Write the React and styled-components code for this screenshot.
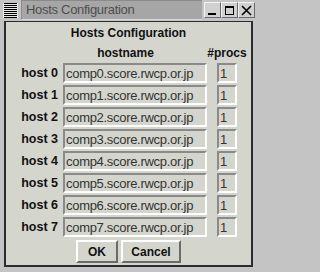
import React from 'react';
import styled, { createGlobalStyle } from 'styled-components';

const GlobalStyle = createGlobalStyle`
  body {
    margin: 0;
    background: #c4c4c4;
    font-family: "Liberation Sans", Arial, sans-serif;
  }
`;

const Window = styled.div`
  width: 257px;
  height: 272px;
  box-sizing: border-box;
  background: #c4c4c4;
  display: flex;
  flex-direction: column;
  overflow: hidden;
`;

const TitleBar = styled.div`
  height: 20px;
  display: flex;
  align-items: stretch;
  padding-right: 2px;
`;

const MenuButton = styled.div`
  width: 21px;
  display: flex;
  align-items: center;
  justify-content: center;
`;

const TitleLabel = styled.div`
  flex: 1;
  background: #a6a6a6;
  border-top: 1px solid #8a8a8a;
  border-left: 1px solid #8a8a8a;
  border-bottom: 1px solid #d8d8d8;
  color: #4e4e4e;
  font-size: 13px;
  letter-spacing: -0.3px;
  line-height: 18px;
  padding-left: 4px;
  margin: 0 2px 0 0;
  white-space: nowrap;
`;

const WinButton = styled.div`
  width: 17px;
  height: 16px;
  margin-top: 2px;
  box-sizing: border-box;
  background: #d0d0d0;
  border-top: 1px solid #f4f4f4;
  border-left: 1px solid #f4f4f4;
  border-right: 1px solid #6a6a6a;
  border-bottom: 1px solid #6a6a6a;
  display: flex;
  align-items: center;
  justify-content: center;
  & + & {
    margin-left: 0;
  }
`;

const Body = styled.div`
  flex: 1;
  padding: 1px 4px 5px 4px;
  display: flex;
`;

const Content = styled.div`
  flex: 1;
  background: #d4d6ce;
  border-top: 1px solid #2c2c2c;
  border-left: 2px solid #2c2c2c;
  border-right: 2px solid #2c2c2c;
  border-bottom: 2px solid #2c2c2c;
  display: flex;
  flex-direction: column;
  color: #111;
`;

const Heading = styled.div`
  margin: 3px 0 4px;
  line-height: 16px;
  font-size: 12px;
  font-weight: bold;
  text-align: center;
`;

const HostGrid = styled.div`
  display: grid;
  grid-template-columns: 57px 144px 40px;
  grid-template-rows: 16px;
  grid-auto-rows: 20px;
  row-gap: 2px;
`;

const ColHeader = styled.div`
  font-size: 12px;
  font-weight: bold;
  line-height: 16px;
  text-align: center;
  white-space: nowrap;
  padding-right: ${(p) => p.$shift || 0}px;
`;

const HostLabel = styled.div`
  font-size: 12.5px;
  font-weight: bold;
  text-align: right;
  padding-right: 5px;
  line-height: 20px;
  white-space: nowrap;
`;

const Field = styled.input`
  width: ${(p) => p.$w}px;
  height: 20px;
  box-sizing: border-box;
  margin: 0;
  padding: 0 0 0 1px;
  background: #d4d6ce;
  border-top: 2px solid #8a8a8a;
  border-left: 2px solid #8a8a8a;
  border-right: 2px solid #ffffff;
  border-bottom: 2px solid #ffffff;
  border-radius: 0;
  outline: none;
  font-family: "Liberation Sans", Arial, sans-serif;
  font-size: 13px;
  letter-spacing: -0.3px;
  color: #333;
  justify-self: ${(p) => (p.$center ? 'center' : 'start')};
`;

const ButtonRow = styled.div`
  margin-top: 3px;
  display: flex;
  justify-content: center;
  gap: 3px;
`;

const DlgButton = styled.button`
  width: ${(p) => p.$w}px;
  height: 23px;
  margin: 0;
  padding: 0;
  background: #d4d6ce;
  border-top: 2px solid #ffffff;
  border-left: 2px solid #ffffff;
  border-right: 2px solid #6a6a6a;
  border-bottom: 2px solid #6a6a6a;
  border-radius: 0;
  font-family: "Liberation Sans", Arial, sans-serif;
  font-size: 12px;
  font-weight: bold;
  color: #111;
`;

const MenuIcon = () => (
  <svg width="15" height="15" viewBox="0 0 15 15">
    <rect x="0" y="0" width="15" height="15" fill="#e8e8e8" />
    {[0, 2, 4, 6, 8, 10, 12, 14].map((y) => (
      <rect key={y} x="1" y={y} width="13" height="1" fill="#000" />
    ))}
  </svg>
);

const MinIcon = () => (
  <svg width="11" height="11" viewBox="0 0 11 11">
    <rect x="1" y="8" width="8" height="2" fill="#000" />
  </svg>
);

const MaxIcon = () => (
  <svg width="11" height="11" viewBox="0 0 11 11">
    <rect x="1.5" y="1.5" width="8" height="8" fill="none" stroke="#000" />
    <rect x="1" y="1" width="9" height="2" fill="#000" />
  </svg>
);

const CloseIcon = () => (
  <svg width="11" height="11" viewBox="0 0 11 11">
    <path d="M1 1 L10 10 M10 1 L1 10" stroke="#000" strokeWidth="1.6" />
  </svg>
);

const hosts = [0, 1, 2, 3, 4, 5, 6, 7].map((i) => ({
  label: `host ${i}`,
  name: `comp${i}.score.rwcp.or.jp`,
  procs: '1',
}));

export default function App() {
  return (
    <>
      <GlobalStyle />
      <Window>
        <TitleBar>
          <MenuButton>
            <MenuIcon />
          </MenuButton>
          <TitleLabel>Hosts Configuration</TitleLabel>
          <WinButton><MinIcon /></WinButton>
          <WinButton><MaxIcon /></WinButton>
          <WinButton><CloseIcon /></WinButton>
        </TitleBar>
        <Body>
          <Content>
            <Heading>Hosts Configuration</Heading>
            <HostGrid>
              <div />
              <ColHeader $shift={19}>hostname</ColHeader>
              <ColHeader>#procs</ColHeader>
              {hosts.map((h) => (
                <React.Fragment key={h.label}>
                  <HostLabel>{h.label}</HostLabel>
                  <Field $w={144} readOnly value={h.name} />
                  <Field $w={20} $center readOnly value={h.procs} />
                </React.Fragment>
              ))}
            </HostGrid>
            <ButtonRow>
              <DlgButton $w={42}>OK</DlgButton>
              <DlgButton $w={60}>Cancel</DlgButton>
            </ButtonRow>
          </Content>
        </Body>
      </Window>
    </>
  );
}
